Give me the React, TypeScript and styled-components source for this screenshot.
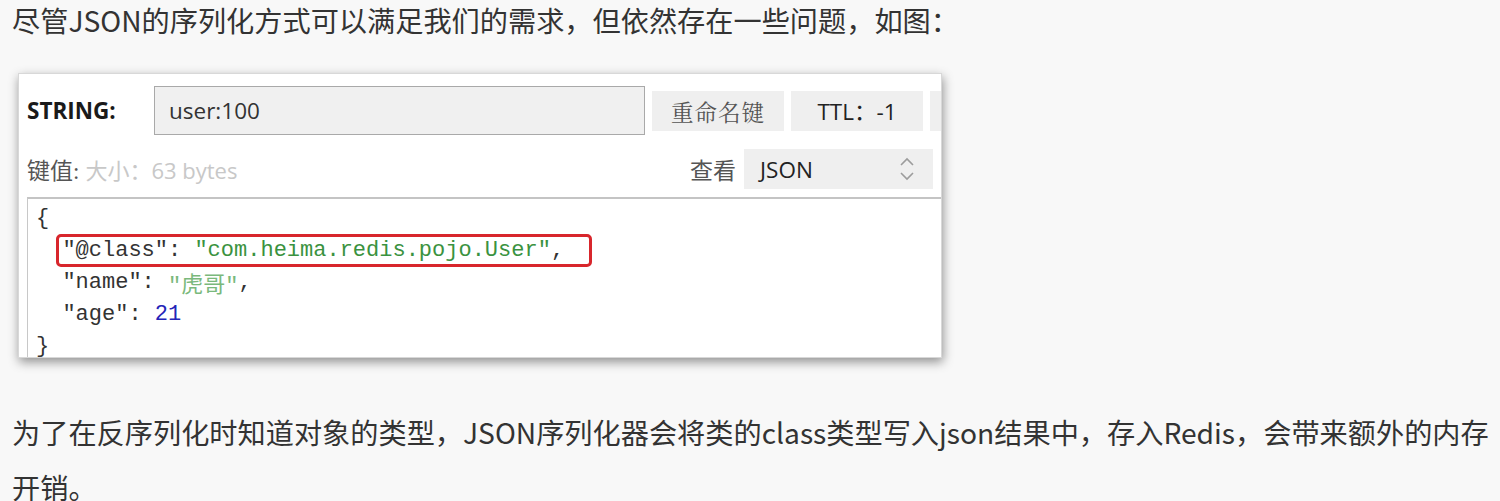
import React from "react";
import styled, { createGlobalStyle } from "styled-components";

const GlobalStyle = createGlobalStyle`
  html, body {
    margin: 0;
    padding: 0;
    background: #f8f8f8;
  }
  body {
    font-family: "Noto Sans", "Noto Sans CJK SC", sans-serif;
    color: #333;
  }
`;

const Page = styled.div`
  width: 1500px;
  height: 501px;
  overflow: hidden;
  display: flex;
  flex-direction: column;
  & > * {
    flex-shrink: 0;
  }
`;

const Paragraph = styled.p<{ $top?: number }>`
  margin: ${(p) => p.$top ?? 0}px 0 0 12px;
  font-family: "Noto Sans CJK SC", "Noto Sans", sans-serif;
  font-size: 28.2px;
  line-height: ${(p) => (p.$top ? 55 : 40)}px;
  color: #333;
  white-space: pre-wrap;
`;

const Window = styled.div`
  margin: 33px 0 0 18px;
  width: 924px;
  height: 285px;
  background: #fff;
  border: 1px solid #d8d8d8;
  box-sizing: border-box;
  box-shadow: 1px 4px 10px rgba(0, 0, 0, 0.42);
  overflow: hidden;
  display: flex;
  flex-direction: column;
  padding: 12px 0 0 8px;
  & > * {
    flex-shrink: 0;
  }
`;

const KeyRow = styled.div`
  display: flex;
  align-items: center;
  gap: 7px;
  height: 49px;
  & > * {
    flex-shrink: 0;
  }
`;

const TypeLabel = styled.div`
  width: 120px;
  font-family: "Open Sans", "Noto Sans", sans-serif;
  font-weight: 700;
  font-size: 22.5px;
  color: #1a1a1a;
`;

const KeyInput = styled.div`
  width: 491px;
  height: 49px;
  box-sizing: border-box;
  background: #f0f0f0;
  border: 1px solid #a9a9a9;
  display: flex;
  align-items: center;
  padding-left: 14px;
  font-family: "Open Sans", "Noto Sans", sans-serif;
  font-size: 22.5px;
  color: #333;
`;

const ToolButton = styled.div<{ $serif?: boolean }>`
  width: 132px;
  height: 40px;
  background: #efefef;
  display: flex;
  align-items: center;
  justify-content: center;
  font-family: ${(p) =>
    p.$serif
      ? `"Noto Serif CJK SC", "Liberation Serif", "Noto Sans CJK SC", serif`
      : `"Open Sans", "Noto Sans", "Noto Sans CJK SC", sans-serif`};
  font-size: 22.5px;
  color: ${(p) => (p.$serif ? "#555" : "#222")};
  letter-spacing: ${(p) => (p.$serif ? "1px" : "0")};
`;

const ValueRow = styled.div`
  display: flex;
  align-items: center;
  height: 40px;
  margin-top: 14px;
  padding-right: 8px;
`;

const ValueLabel = styled.span`
  font-family: "Liberation Serif", "Noto Sans CJK SC", serif;
  font-size: 23px;
  color: #555;
`;

const SizeInfo = styled.span`
  margin-left: 6px;
  font-family: "Open Sans", "Noto Sans CJK SC", sans-serif;
  font-size: 22px;
  color: #c8c8c8;
`;

const Spacer = styled.div`
  flex: 1;
`;

const ViewLabel = styled.span`
  font-family: "Liberation Serif", "Noto Sans CJK SC", serif;
  font-size: 23px;
  color: #555;
  margin-right: 8px;
`;

const Select = styled.div`
  width: 189px;
  height: 40px;
  background: #efefef;
  display: flex;
  align-items: center;
  justify-content: space-between;
  box-sizing: border-box;
  padding: 0 18px 0 16px;
  font-family: "Open Sans", "Noto Sans", sans-serif;
  font-size: 22.5px;
  color: #222;
`;

const Editor = styled.div`
  margin-top: 8px;
  flex: 1;
  border-top: 2px solid #c4c4c4;
  border-left: 1px solid #c8c8c8;
  padding: 3px 0 0 8px;
  overflow: hidden;
  font-family: "Liberation Mono", "Noto Sans CJK SC", monospace;
  font-size: 22px;
  color: #333;
`;

const CodeLine = styled.div<{ $indent?: boolean }>`
  display: flex;
  align-items: center;
  height: 32px;
  white-space: pre;
  padding-left: ${(p) => (p.$indent ? "2ch" : "0")};
`;

const Highlight = styled.span`
  display: inline-block;
  line-height: 27px;
  margin-left: -6px;
  padding: 0 25px 0 3px;
  border: 3px solid #d8262c;
  border-radius: 5px;
`;

const Str = styled.span<{ $light?: boolean }>`
  color: ${(p) => (p.$light ? "#7ab97c" : "#3a9240")};
`;

const Num = styled.span`
  color: #2424b8;
`;

const Chevrons = () => (
  <svg width="16" height="26" viewBox="0 0 16 26" fill="none">
    <path d="M2 9 L8 3 L14 9" stroke="#9c9c9c" strokeWidth="1.6" />
    <path d="M2 17 L8 23 L14 17" stroke="#9c9c9c" strokeWidth="1.6" />
  </svg>
);

export default function App() {
  return (
    <Page>
      <GlobalStyle />
      <Paragraph>尽管JSON的序列化方式可以满足我们的需求，但依然存在一些问题，如图：</Paragraph>
      <Window>
        <KeyRow>
          <TypeLabel>STRING:</TypeLabel>
          <KeyInput>user:100</KeyInput>
          <ToolButton $serif>重命名键</ToolButton>
          <ToolButton>TTL：-1</ToolButton>
          <ToolButton />
        </KeyRow>
        <ValueRow>
          <ValueLabel>键值:</ValueLabel>
          <SizeInfo>大小：63 bytes</SizeInfo>
          <Spacer />
          <ViewLabel>查看</ViewLabel>
          <Select>
            <span>JSON</span>
            <Chevrons />
          </Select>
        </ValueRow>
        <Editor>
          <CodeLine>{"{"}</CodeLine>
          <CodeLine $indent>
            <Highlight>
              "@class": <Str>"com.heima.redis.pojo.User"</Str>,
            </Highlight>
          </CodeLine>
          <CodeLine $indent>
            "name": <Str $light>"虎哥"</Str>,
          </CodeLine>
          <CodeLine $indent>
            "age": <Num>21</Num>
          </CodeLine>
          <CodeLine>{"}"}</CodeLine>
        </Editor>
      </Window>
      <Paragraph $top={46}>
        为了在反序列化时知道对象的类型，JSON序列化器会将类的class类型写入json结果中，存入Redis，会带来额外的内存开销。
      </Paragraph>
    </Page>
  );
}
